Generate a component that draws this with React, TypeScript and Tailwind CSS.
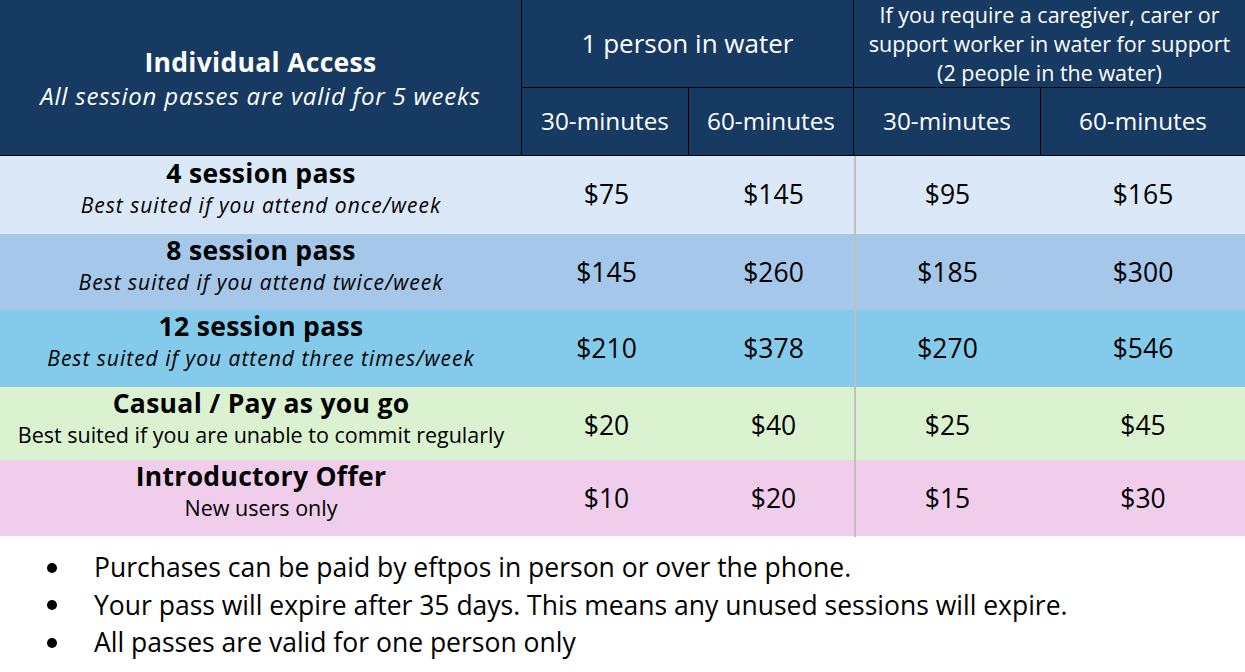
import React from "react";

const rows = [
  { title: "4 session pass", sub: "Best suited if you attend once/week", italic: true, bg: "bg-[#dae8f7]", h: "h-[78px]", prices: ["$75", "$145", "$95", "$165"] },
  { title: "8 session pass", sub: "Best suited if you attend twice/week", italic: true, bg: "bg-[#a5c7e9]", h: "h-[76px]", prices: ["$145", "$260", "$185", "$300"] },
  { title: "12 session pass", sub: "Best suited if you attend three times/week", italic: true, bg: "bg-[#84cbeb]", h: "h-[77px]", prices: ["$210", "$378", "$270", "$546"] },
  { title: "Casual / Pay as you go", sub: "Best suited if you are unable to commit regularly", italic: false, bg: "bg-[#daf2d0]", h: "h-[73px]", prices: ["$20", "$40", "$25", "$45"] },
  { title: "Introductory Offer", sub: "New users only", italic: false, bg: "bg-[#f1cdec]", h: "h-[76px]", prices: ["$10", "$20", "$15", "$30"] },
];

export default function App() {
  return (
    <div className="w-[1245px] h-[672px] bg-white overflow-hidden text-black" style={{ fontFamily: '"Open Sans", "Liberation Sans", Arial, sans-serif' }}>
      {/* Header */}
      <div className="grid grid-cols-[522px_167px_165px_187px_204px] grid-rows-[88px_68px] bg-[#173a62] text-white">
        <div className="row-span-2 flex flex-col items-center justify-center border-r border-b border-black pt-[3px]">
          <div className="text-[26.5px] font-bold leading-[34px] tracking-[0.3px]">Individual Access</div>
          <div className="text-[24px] italic leading-[34px] tracking-[0.8px]">All session passes are valid for 5 weeks</div>
        </div>
        <div className="col-span-2 flex items-center justify-center border-r border-b border-black text-[26px]">1 person in water</div>
        <div className="col-span-2 flex flex-col items-center justify-center border-b border-black text-[21.5px] leading-[29px] text-center">
          <div>If you require a caregiver, carer or</div>
          <div>support worker in water for support</div>
          <div>(2 people in the water)</div>
        </div>
        <div className="flex items-center justify-center border-r border-b border-black text-[24.3px]">30-minutes</div>
        <div className="flex items-center justify-center border-r border-b border-black text-[24.3px]">60-minutes</div>
        <div className="flex items-center justify-center border-r border-b border-black text-[24.3px]">30-minutes</div>
        <div className="flex items-center justify-center border-b border-black text-[24.3px]">60-minutes</div>
      </div>
      {/* Body */}
      {rows.map((r) => (
        <div key={r.title} className={`grid grid-cols-[522px_167px_165px_2px_185px_204px] ${r.h} ${r.bg}`}>
          <div className="flex flex-col items-center justify-center pb-[13px]">
            <div className="text-[26.5px] font-bold leading-[32px] tracking-[0.3px]">{r.title}</div>
            <div className={`leading-[32px] ${r.italic ? "italic text-[21px] tracking-[1px]" : "text-[21.5px]"}`}>{r.sub}</div>
          </div>
          <div className="flex items-center justify-center text-[26.5px] pl-[2px]">{r.prices[0]}</div>
          <div className="flex items-center justify-center text-[26.5px] pl-[4px]">{r.prices[1]}</div>
          <div className="bg-[#bfbfbf]" />
          <div className="flex items-center justify-center text-[26.5px] pr-[2px]">{r.prices[2]}</div>
          <div className="flex items-center justify-center text-[26.5px]">{r.prices[3]}</div>
        </div>
      ))}
      {/* Notes */}
      <ul className="pt-[13px] pl-[44px] text-[26.5px] leading-[37.5px]">
        {[
          "Purchases can be paid by eftpos in person or over the phone.",
          "Your pass will expire after 35 days. This means any unused sessions will expire.",
          "All passes are valid for one person only",
        ].map((t) => (
          <li key={t} className="flex items-center">
            <span className="w-[50px] flex items-center">
              <span className="block w-[10px] h-[10px] rounded-full bg-black ml-[3px]" />
            </span>
            <span>{t}</span>
          </li>
        ))}
      </ul>
    </div>
  );
}
